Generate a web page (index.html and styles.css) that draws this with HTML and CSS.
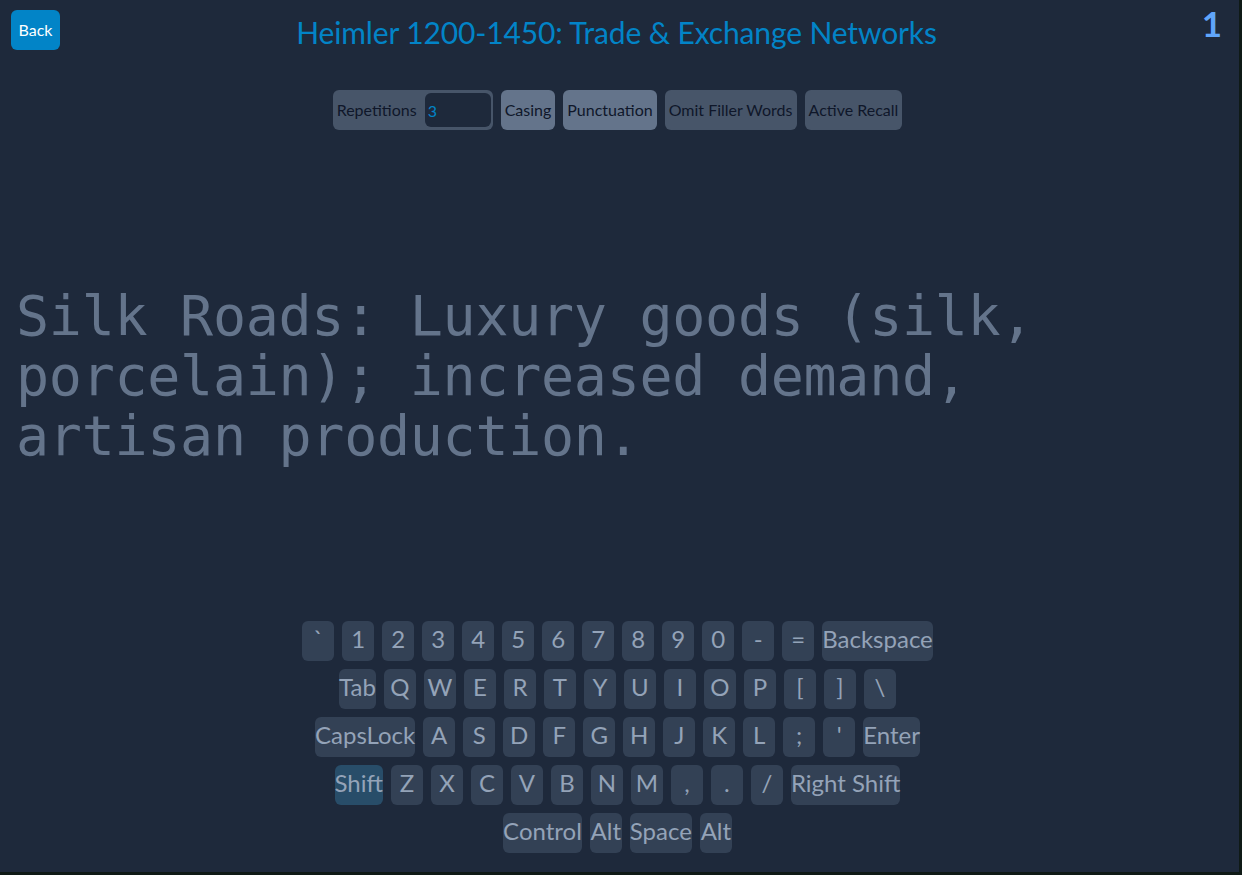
FILE: index.html
```html
<!DOCTYPE html>
<html lang="en">
<head>
<meta charset="utf-8">
<title>Heimler 1200-1450: Trade &amp; Exchange Networks</title>
<link rel="stylesheet" href="styles.css">
</head>
<body>
<div class="app">
  <header class="top">
    <button class="back">Back</button>
    <h1 class="title">Heimler 1200-1450: Trade &amp; Exchange Networks</h1>
    <div class="count">1</div>
  </header>

  <div class="options">
    <label class="opt opt-group">
      <span>Repetitions</span>
      <input class="reps" type="text" value="3">
    </label>
    <button class="opt opt-on">Casing</button>
    <button class="opt opt-on">Punctuation</button>
    <button class="opt">Omit Filler Words</button>
    <button class="opt">Active Recall</button>
  </div>

  <main class="prompt">
    <p class="prompt-text">Silk Roads: Luxury goods (silk, porcelain); increased demand, artisan production.</p>
  </main>

  <div class="keyboard">
    <div class="row">
      <span class="key">`</span><span class="key">1</span><span class="key">2</span><span class="key">3</span><span class="key">4</span><span class="key">5</span><span class="key">6</span><span class="key">7</span><span class="key">8</span><span class="key">9</span><span class="key">0</span><span class="key">-</span><span class="key">=</span><span class="key">Backspace</span>
    </div>
    <div class="row">
      <span class="key">Tab</span><span class="key">Q</span><span class="key">W</span><span class="key">E</span><span class="key">R</span><span class="key">T</span><span class="key">Y</span><span class="key">U</span><span class="key">I</span><span class="key">O</span><span class="key">P</span><span class="key">[</span><span class="key">]</span><span class="key">\</span>
    </div>
    <div class="row">
      <span class="key">CapsLock</span><span class="key">A</span><span class="key">S</span><span class="key">D</span><span class="key">F</span><span class="key">G</span><span class="key">H</span><span class="key">J</span><span class="key">K</span><span class="key">L</span><span class="key">;</span><span class="key">'</span><span class="key">Enter</span>
    </div>
    <div class="row">
      <span class="key key-on">Shift</span><span class="key">Z</span><span class="key">X</span><span class="key">C</span><span class="key">V</span><span class="key">B</span><span class="key">N</span><span class="key">M</span><span class="key">,</span><span class="key">.</span><span class="key">/</span><span class="key">Right Shift</span>
    </div>
    <div class="row">
      <span class="key">Control</span><span class="key">Alt</span><span class="key">Space</span><span class="key">Alt</span>
    </div>
  </div>
</div>
</body>
</html>
```

FILE: styles.css
```css
html, body {
  margin: 0;
  padding: 0;
  background: #0f1a16;
}

body {
  font-family: Lato, "Open Sans", sans-serif;
  width: 1242px;
  height: 875px;
  overflow: hidden;
}

.app {
  box-sizing: border-box;
  width: 1239px;
  height: 872px;
  padding-right: 4px;
  background: #1e293b;
  display: flex;
  flex-direction: column;
}

.top {
  display: grid;
  grid-template-columns: 1fr auto 1fr;
  align-items: start;
  padding: 10px 13px 0 11px;
}

.back {
  justify-self: start;
  height: 40px;
  padding: 8px 7.5px;
  border: 0;
  border-radius: 6px;
  background: #0284c7;
  color: #ffffff;
  font-family: inherit;
  font-size: 16px;
  line-height: 24px;
}

.title {
  margin: 4px 0 0;
  font-size: 30px;
  line-height: 36px;
  font-weight: 400;
  letter-spacing: -0.14px;
  color: #0284c7;
  text-align: center;
}

.count {
  justify-self: end;
  margin-top: -7px;
  font-size: 35px;
  line-height: 40px;
  font-weight: 700;
  color: #60a5fa;
}

.options {
  display: flex;
  justify-content: center;
  gap: 8px;
  margin-top: 40px;
}

.opt {
  box-sizing: border-box;
  height: 40px;
  padding: 8px 4px;
  border: 0;
  border-radius: 6px;
  background: #475569;
  color: #0f172a;
  font-family: inherit;
  font-size: 16px;
  line-height: 24px;
}

.opt-on {
  background: #64748b;
}

.opt-group {
  display: flex;
  align-items: center;
  gap: 8px;
  padding: 3px 2px 3px 4px;
}

.reps {
  box-sizing: border-box;
  width: 66px;
  height: 34px;
  padding: 0 3px;
  border: 0;
  border-radius: 6px;
  background: #1e293b;
  color: #0284c7;
  font-family: inherit;
  font-size: 16px;
  outline: none;
}

.prompt {
  flex: 1;
  display: flex;
  align-items: center;
  padding: 0 16px;
}

.prompt-text {
  margin: 0;
  max-width: 1150px;
  font-family: "DejaVu Sans Mono", "Liberation Mono", monospace;
  font-size: 55px;
  line-height: 60px;
  letter-spacing: -0.3px;
  color: #64748b;
}

.keyboard {
  display: flex;
  flex-direction: column;
  gap: 8px;
  padding-bottom: 19px;
}

.row {
  display: flex;
  justify-content: center;
  gap: 8px;
}

.key {
  box-sizing: border-box;
  min-width: 32px;
  height: 40px;
  padding-top: 2px;
  border-radius: 6px;
  background: #334155;
  color: #94a3b8;
  font-size: 24px;
  line-height: 32px;
  text-align: center;
}

.key-on {
  background: #284d69;
}
```
